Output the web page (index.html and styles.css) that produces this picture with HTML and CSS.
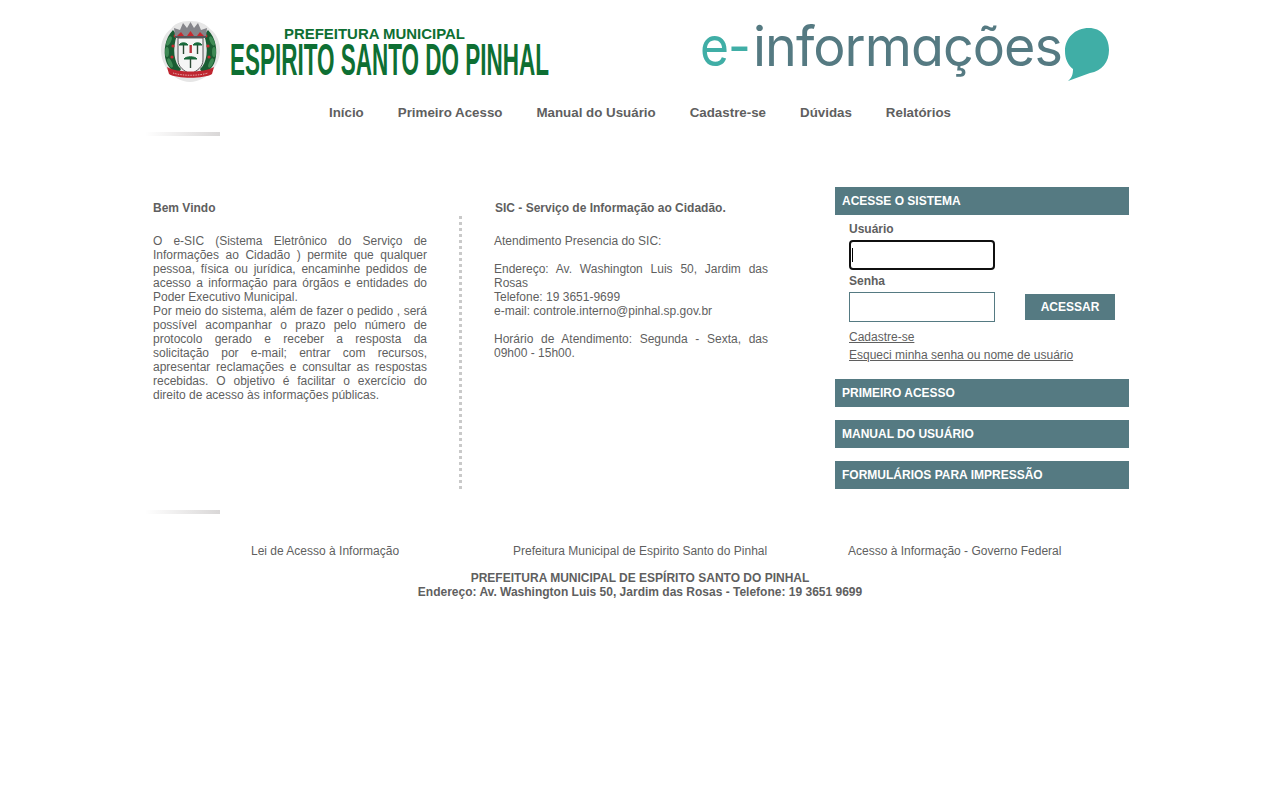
FILE: index.html
```html
<!DOCTYPE html>
<html lang="pt-BR">
<head>
  <meta charset="UTF-8">
  <title>e-Informações - Prefeitura Municipal de Espírito Santo do Pinhal</title>
  <link rel="stylesheet" href="styles.css">
</head>
<body>
  <div class="wrapper">
    <header class="header">
      <svg class="logo-pref" width="390" height="64" viewBox="0 0 390 64">
        <!-- brasao -->
        <path d="M30 2 C20 2 14 5 11 10 C4 15 1 23 1 31 C1 46 12 62 30 63 C48 62 60 46 60 31 C60 23 57 15 50 10 C46 5 40 2 30 2Z" fill="#e6e6e6"/>
        <g id="ramo">
          <path d="M13 11 C5 19 3 32 6 42 C8 48 12 52 18 55 L21 50 C14 44 12 30 17 16Z" fill="#1a5c32"/>
          <ellipse cx="9" cy="22" rx="2" ry="5" fill="#3f8a55" transform="rotate(25 9 22)"/>
          <ellipse cx="7" cy="33" rx="2" ry="5" fill="#3f8a55"/>
          <ellipse cx="10" cy="44" rx="2" ry="5" fill="#3f8a55" transform="rotate(-25 10 44)"/>
          <circle cx="13" cy="27" r="1.6" fill="#c8292e"/>
          <circle cx="12" cy="38" r="1.6" fill="#c8292e"/>
          <circle cx="15" cy="17" r="1.4" fill="#c8292e"/>
        </g>
        <use href="#ramo" transform="translate(61 0) scale(-1 1)"/>
        <!-- coroa -->
        <path d="M15 18 L14 9 L20 11 L23 4 L27 9 L30.5 3 L34 9 L38 4 L41 11 L47 9 L46 18Z" fill="#85858a"/>
        <path d="M17 17 L21 13 L24 17 M37 17 L40 13 L44 17 M27 17 L30.5 12 L34 17Z" fill="#c8292e"/>
        <rect x="15" y="17" width="31" height="2" fill="#55555a"/>
        <!-- escudo -->
        <path d="M18 19 H43 V41 C43 48 37 52 30.5 55 C24 52 18 48 18 41Z" fill="#f5f5f5" stroke="#555"/>
        <path d="M19 26 C21 23 26 23 28 26Z M33 26 C35 23 40 23 42 26Z M24 40 C26 37 35 37 37 40Z" fill="#17693a" stroke="#17693a"/>
        <path d="M23.5 26 V35 M37.5 26 V35 M30.5 40 V49" stroke="#2d4a36" stroke-width="1.4"/>
        <rect x="29.5" y="26" width="2.4" height="8" fill="#b8323a"/>
        <!-- faixa -->
        <path d="M7 48 C17 54 44 54 54 48 L52 55 C44 60 17 60 9 55Z" fill="#bf2630"/>
        <path d="M13 54 C22 57 39 57 48 54" stroke="#ecc9c9" stroke-width="0.8" stroke-dasharray="1.5 1" fill="none"/>
        <text class="pref-small" x="124" y="20" textLength="181" lengthAdjust="spacingAndGlyphs">PREFEITURA MUNICIPAL</text>
        <text class="pref-big" x="70" y="56" textLength="319" lengthAdjust="spacingAndGlyphs">ESPIRITO SANTO DO PINHAL</text>
      </svg>
      <svg class="logo-info" width="412" height="58" viewBox="0 0 412 58">
        <text class="info-text info-e" x="2" y="42" textLength="50" lengthAdjust="spacingAndGlyphs">e-</text>
        <text class="info-text" x="55" y="42" textLength="309" lengthAdjust="spacingAndGlyphs">informações</text>
        <path d="M391 4 C377 4 367 14 367 27 C367 35 370 41 375 45 C375 50 374 54 370 57 L392 49 C404 47 411 38 411 26 C411 13 403 4 391 4Z" fill="#40aea6"/>
      </svg>
    </header>

    <nav class="menu">
      <a href="#">Início</a>
      <a href="#">Primeiro Acesso</a>
      <a href="#">Manual do Usuário</a>
      <a href="#">Cadastre-se</a>
      <a href="#">Dúvidas</a>
      <a href="#">Relatórios</a>
    </nav>
    <div class="fade-line"></div>

    <main class="content">
      <section class="col col-welcome">
        <h2>Bem Vindo</h2>
        <p>O e-SIC (Sistema Eletrônico do Serviço de Informações ao Cidadão ) permite que qualquer pessoa, física ou jurídica, encaminhe pedidos de acesso a informação para órgãos e entidades do Poder Executivo Municipal.<br>Por meio do sistema, além de fazer o pedido , será possível acompanhar o prazo pelo número de protocolo gerado e receber a resposta da solicitação por e-mail; entrar com recursos, apresentar reclamações e consultar as respostas recebidas. O objetivo é facilitar o exercício do direito de acesso às informações públicas.</p>
      </section>
      <div class="divider"></div>
      <section class="col col-sic">
        <h2>SIC - Serviço de Informação ao Cidadão.</h2>
        <p>Atendimento Presencia do SIC:<br><br>Endereço: Av. Washington Luis 50, Jardim das Rosas<br>Telefone: 19 3651-9699<br>e-mail: controle.interno@pinhal.sp.gov.br<br><br>Horário de Atendimento: Segunda - Sexta, das 09h00 - 15h00.</p>
      </section>
      <aside class="sidebar">
        <div class="side-title">ACESSE O SISTEMA</div>
        <form class="login">
          <label for="usuario">Usuário</label>
          <div class="field">
            <input type="text" id="usuario" autofocus>
            <span class="caret"></span>
          </div>
          <label for="senha">Senha</label>
          <div class="login-row">
            <input type="password" id="senha">
            <button type="button">ACESSAR</button>
          </div>
          <a href="#">Cadastre-se</a>
          <a href="#">Esqueci minha senha ou nome de usuário</a>
        </form>
        <div class="side-title">PRIMEIRO ACESSO</div>
        <div class="side-title">MANUAL DO USUÁRIO</div>
        <div class="side-title">FORMULÁRIOS PARA IMPRESSÃO</div>
      </aside>
    </main>

    <div class="fade-line"></div>

    <footer class="footer">
      <div class="footer-links">
        <a href="#">Lei de Acesso à Informação</a>
        <a href="#">Prefeitura Municipal de Espirito Santo do Pinhal</a>
        <a href="#">Acesso à Informação - Governo Federal</a>
      </div>
      <p class="address">PREFEITURA MUNICIPAL DE ESPÍRITO SANTO DO PINHAL<br>Endereço: Av. Washington Luis 50, Jardim das Rosas - Telefone: 19 3651 9699</p>
    </footer>
  </div>
</body>
</html>
```

FILE: styles.css
```css
body {
  margin: 0;
  background: #fff;
  color: #5f5f5f;
  font-family: "Liberation Sans", Arial, sans-serif;
  font-size: 12px;
  line-height: 14px;
}
a {
  color: #5f5f5f;
}
.wrapper {
  width: 990px;
  margin: 0 auto;
}
.header {
  display: flex;
  justify-content: space-between;
  align-items: flex-start;
  height: 100px;
  padding: 19px 25px 0 15px;
  box-sizing: border-box;
}
.header svg {
  overflow: visible;
}
.logo-info {
  margin-top: 5px;
}
.pref-small {
  font: bold 15px "Liberation Sans", sans-serif;
  fill: #0e6f33;
}
.pref-big {
  font: bold 44px "Liberation Sans Narrow", "Liberation Sans", sans-serif;
  fill: #0e6f33;
}
.info-text {
  font: 400 55px Inter, sans-serif;
  font-feature-settings: "cv11";
  letter-spacing: -1px;
  fill: #557a82;
}
.info-e {
  fill: #40aea6;
}
.menu {
  display: flex;
  justify-content: center;
  gap: 34px;
  height: 32px;
  padding-top: 5px;
  box-sizing: border-box;
  font-size: 13.33px;
  line-height: 16px;
  font-weight: bold;
}
.menu a {
  text-decoration: none;
}
.fade-line {
  width: 75px;
  height: 4px;
  background: linear-gradient(to right, #fff, #d9d7d7);
}
.content {
  display: flex;
  height: 323px;
  padding-top: 51px;
}
.col {
  width: 274px;
}
.col h2 {
  margin: 0;
  font-size: 12px;
  line-height: 14px;
  padding-top: 14px;
}
.col p {
  margin: 19px 0 0;
  text-align: justify;
}
.col-welcome {
  margin-left: 8px;
}
.col-sic {
  margin-left: 32px;
}
.col-sic h2 {
  padding-left: 1px;
}
.divider {
  width: 0;
  height: 273px;
  margin: 29px 0 0 32px;
  border-left: 3px dotted #c9c9c9;
}
.sidebar {
  width: 294px;
  margin-left: 67px;
}
.side-title {
  height: 28px;
  margin-bottom: 13px;
  padding-left: 7px;
  background: #557a82;
  color: #fff;
  font-weight: bold;
  line-height: 28px;
}
.login {
  display: flex;
  flex-direction: column;
  align-items: flex-start;
  margin: -13px 0 17px;
  padding: 7px 14px 0;
}
.login label {
  font-weight: bold;
  margin-bottom: 4px;
}
.login input {
  width: 146px;
  height: 30px;
  padding: 1px 2px;
  margin: 0;
  box-sizing: border-box;
  border: 1px solid #557a82;
  background: #fff;
  display: block;
}
.field {
  position: relative;
  margin-bottom: 4px;
}
.caret {
  position: absolute;
  left: 3px;
  top: 8px;
  width: 1px;
  height: 14px;
  background: #000;
}
.login-row {
  display: flex;
  gap: 30px;
  align-items: center;
  margin-bottom: 4px;
}
.login button {
  width: 90px;
  height: 26px;
  padding: 0;
  border: 0;
  background: #557a82;
  color: #fff;
  font: bold 12px "Liberation Sans", sans-serif;
}
.login a {
  margin-top: 4px;
}
.footer-links {
  display: flex;
  padding: 30px 0 0 106px;
}
.footer-links a {
  text-decoration: none;
}
.footer-links a:nth-child(1) {
  width: 262px;
}
.footer-links a:nth-child(2) {
  width: 335px;
}
.address {
  margin: 13px 0 0;
  text-align: center;
  font-weight: bold;
}
```
